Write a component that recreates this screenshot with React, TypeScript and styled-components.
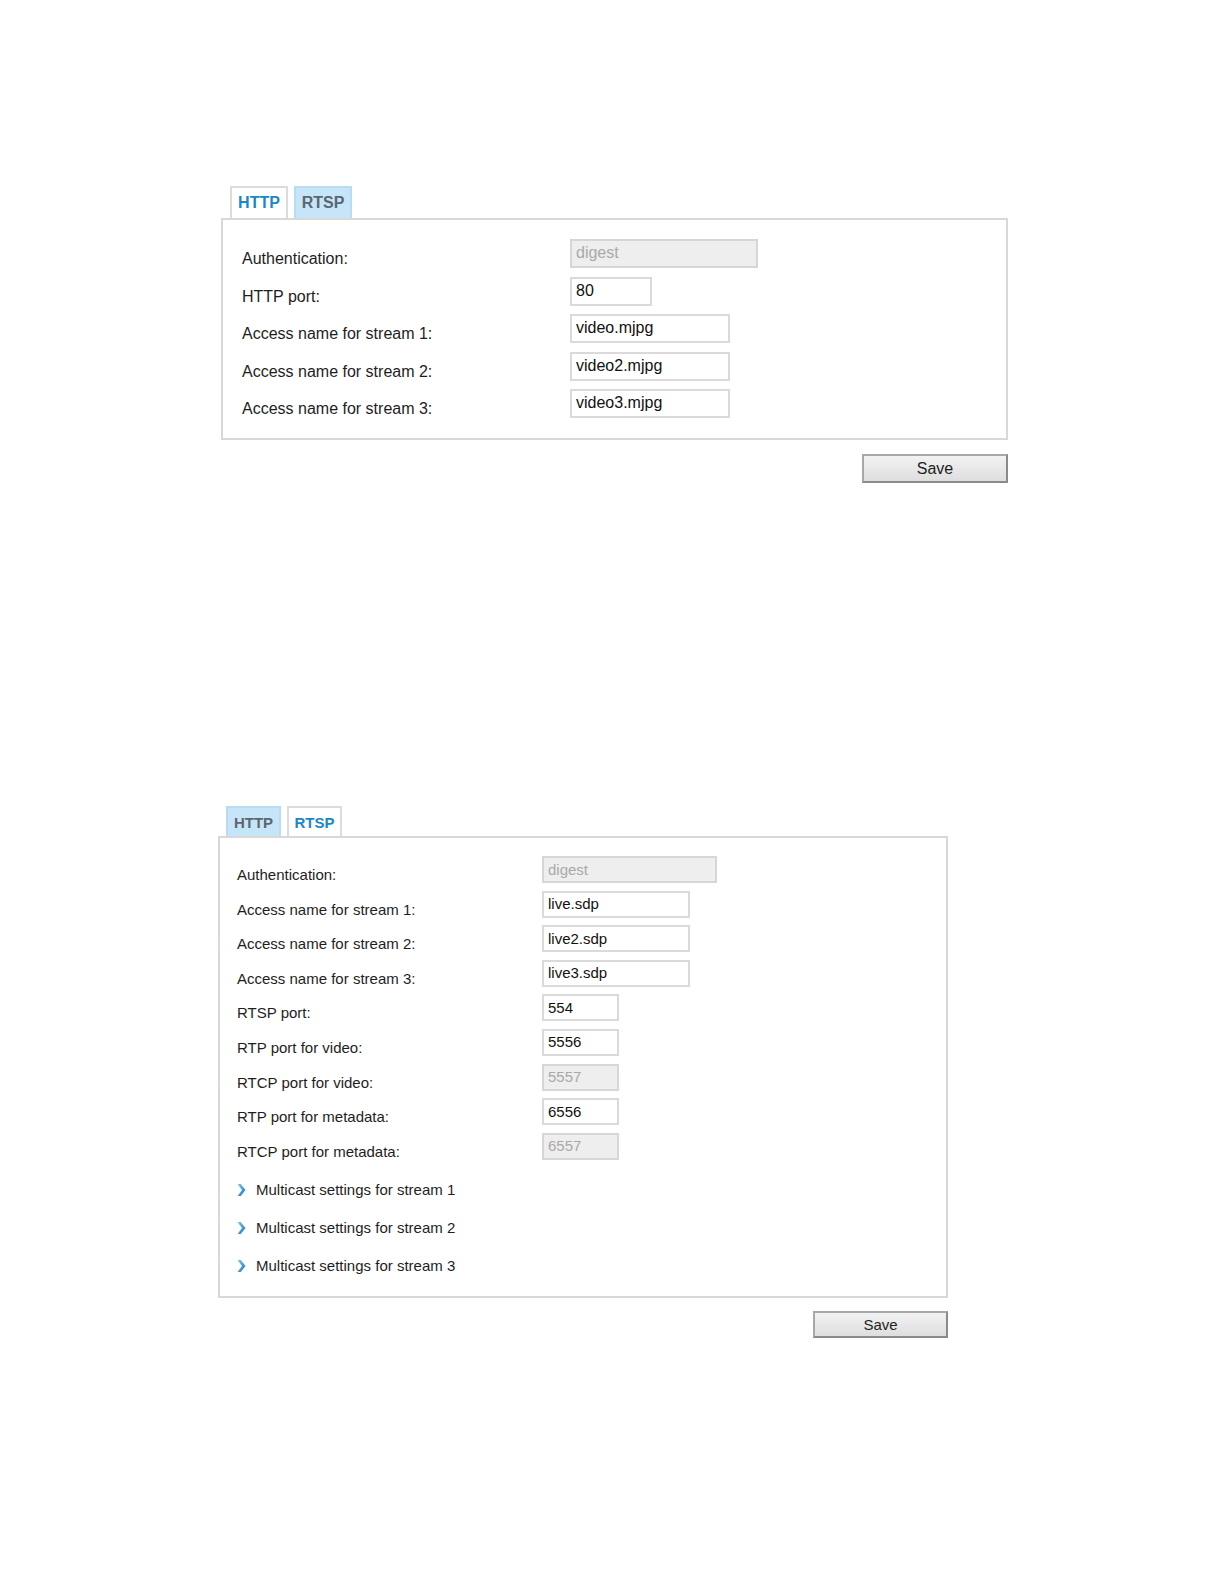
import React, { FC } from "react";
import styled, { createGlobalStyle } from "styled-components";

const GlobalStyle = createGlobalStyle`
  html, body {
    margin: 0;
    padding: 0;
    background: #ffffff;
  }
  body {
    font-family: "Liberation Sans", Arial, sans-serif;
    color: #222222;
  }
`;

type Size = {
  left: number;
  width: number;
  font: number;
  tabW: number;
  tabH: number;
  tabPad: number;
  labelCol: number;
  padLeft: number;
  padTop: number;
  padBottom: number;
  inputH: number;
  rowGap: number;
  saveW: number;
  saveH: number;
  saveGap: number;
};

const large: Size = {
  left: 221,
  width: 787,
  font: 16,
  tabW: 58,
  tabH: 32,
  tabPad: 9,
  labelCol: 328,
  padLeft: 19,
  padTop: 19,
  padBottom: 20,
  inputH: 29,
  rowGap: 8.5,
  saveW: 146,
  saveH: 29,
  saveGap: 14,
};

const small: Size = {
  left: 218,
  width: 730,
  font: 15,
  tabW: 55,
  tabH: 30,
  tabPad: 8,
  labelCol: 305,
  padLeft: 17,
  padTop: 18,
  padBottom: 18,
  inputH: 27,
  rowGap: 7.6,
  saveW: 135,
  saveH: 27,
  saveGap: 13,
};

type Field = {
  label: string;
  value: string;
  width: number;
  disabled?: boolean;
};

const httpFields: Field[] = [
  { label: "Authentication:", value: "digest", width: 188, disabled: true },
  { label: "HTTP port:", value: "80", width: 82 },
  { label: "Access name for stream 1:", value: "video.mjpg", width: 160 },
  { label: "Access name for stream 2:", value: "video2.mjpg", width: 160 },
  { label: "Access name for stream 3:", value: "video3.mjpg", width: 160 },
];

const rtspFields: Field[] = [
  { label: "Authentication:", value: "digest", width: 175, disabled: true },
  { label: "Access name for stream 1:", value: "live.sdp", width: 148 },
  { label: "Access name for stream 2:", value: "live2.sdp", width: 148 },
  { label: "Access name for stream 3:", value: "live3.sdp", width: 148 },
  { label: "RTSP port:", value: "554", width: 77 },
  { label: "RTP port for video:", value: "5556", width: 77 },
  { label: "RTCP port for video:", value: "5557", width: 77, disabled: true },
  { label: "RTP port for metadata:", value: "6556", width: 77 },
  { label: "RTCP port for metadata:", value: "6557", width: 77, disabled: true },
];

const multicast = [
  "Multicast settings for stream 1",
  "Multicast settings for stream 2",
  "Multicast settings for stream 3",
];

const Chevron: FC = () => (
  <ChevronSvg width="9" height="14" viewBox="0 0 9 14">
    <defs>
      <linearGradient id="chev" x1="0" y1="0" x2="1" y2="1">
        <stop offset="0" stopColor="#86c8f0" />
        <stop offset="1" stopColor="#1474bb" />
      </linearGradient>
    </defs>
    <path d="M0.5 1 L3.8 1 L8.5 7 L3.8 13 L0.5 13 L5 7 Z" fill="url(#chev)" />
  </ChevronSvg>
);

const SettingsBlock: FC<{
  size: Size;
  active: "HTTP" | "RTSP";
  fields: Field[];
  links?: string[];
}> = ({ size, active, fields, links }) => (
  <Section $s={size}>
    <TabBar $s={size}>
      {["HTTP", "RTSP"].map((t) => (
        <Tab key={t} $s={size} $active={t === active}>
          {t}
        </Tab>
      ))}
    </TabBar>
    <Box $s={size}>
      <FieldGrid $s={size}>
        {fields.map((f) => (
          <React.Fragment key={f.label}>
            <Label $s={size}>{f.label}</Label>
            <Input
              $s={size}
              $w={f.width}
              disabled={f.disabled}
              defaultValue={f.value}
              readOnly
            />
          </React.Fragment>
        ))}
      </FieldGrid>
      {links && (
        <LinkList>
          {links.map((l) => (
            <LinkRow key={l} $s={size}>
              <Chevron />
              {l}
            </LinkRow>
          ))}
        </LinkList>
      )}
    </Box>
    <SaveRow $s={size}>
      <SaveButton $s={size}>Save</SaveButton>
    </SaveRow>
  </Section>
);

export default function App() {
  return (
    <>
      <GlobalStyle />
      <Page>
        <SettingsBlock size={large} active="HTTP" fields={httpFields} />
        <Spacer />
        <SettingsBlock
          size={small}
          active="RTSP"
          fields={rtspFields}
          links={multicast}
        />
      </Page>
    </>
  );
}

const Page = styled.div`
  padding-top: 186px;
  height: 1584px;
  box-sizing: border-box;
`;

const Spacer = styled.div`
  height: 323px;
`;

const Section = styled.section<{ $s: Size }>`
  margin-left: ${(p) => p.$s.left}px;
  width: ${(p) => p.$s.width}px;
  font-size: ${(p) => p.$s.font}px;
`;

const TabBar = styled.div<{ $s: Size }>`
  display: flex;
  gap: 6px;
  padding-left: ${(p) => p.$s.tabPad}px;
`;

const Tab = styled.div<{ $s: Size; $active: boolean }>`
  box-sizing: border-box;
  width: ${(p) => p.$s.tabW}px;
  height: ${(p) => p.$s.tabH}px;
  display: flex;
  align-items: center;
  justify-content: center;
  font-weight: bold;
  font-size: ${(p) => p.$s.font}px;
  border: 2px solid ${(p) => (p.$active ? "#dcdcdc" : "#b9dcf3")};
  border-bottom: none;
  background: ${(p) => (p.$active ? "#ffffff" : "#c7e5f9")};
  color: ${(p) => (p.$active ? "#1b87c9" : "#5b6770")};
`;

const Box = styled.div<{ $s: Size }>`
  box-sizing: border-box;
  border: 2px solid #d8d8d8;
  padding: ${(p) => `${p.$s.padTop}px ${p.$s.padLeft}px ${p.$s.padBottom}px`};
`;

const FieldGrid = styled.div<{ $s: Size }>`
  display: grid;
  grid-template-columns: ${(p) => p.$s.labelCol}px 1fr;
  row-gap: ${(p) => p.$s.rowGap}px;
  align-items: center;
`;

const Label = styled.div<{ $s: Size }>`
  padding-top: 5px;
  line-height: ${(p) => p.$s.inputH}px;
  height: ${(p) => p.$s.inputH}px;
  box-sizing: border-box;
  color: #1e1e1e;
  white-space: nowrap;
`;

const Input = styled.input<{ $s: Size; $w: number }>`
  box-sizing: border-box;
  width: ${(p) => p.$w}px;
  height: ${(p) => p.$s.inputH}px;
  margin: 0;
  padding: 0 0 1px 4px;
  font-family: "Liberation Sans", Arial, sans-serif;
  font-size: ${(p) => p.$s.font}px;
  color: #111111;
  background: #ffffff;
  border: 2px solid #dadada;
  border-radius: 0;
  outline: none;

  &:disabled {
    color: #a9a9a9;
    background: #eeeeee;
    border-color: #d6d6d6;
  }
`;

const LinkList = styled.div`
  display: flex;
  flex-direction: column;
  gap: 14px;
  margin-top: 18px;
`;

const LinkRow = styled.div<{ $s: Size }>`
  display: flex;
  align-items: center;
  gap: 10px;
  height: 24px;
  color: #1e1e1e;
`;

const ChevronSvg = styled.svg`
  display: block;
  flex: none;
`;

const SaveRow = styled.div<{ $s: Size }>`
  display: flex;
  justify-content: flex-end;
  margin-top: ${(p) => p.$s.saveGap}px;
`;

const SaveButton = styled.button<{ $s: Size }>`
  box-sizing: border-box;
  width: ${(p) => p.$s.saveW}px;
  height: ${(p) => p.$s.saveH}px;
  margin: 0;
  padding: 0;
  font-family: "Liberation Sans", Arial, sans-serif;
  font-size: ${(p) => p.$s.font}px;
  color: #1e1e1e;
  background: linear-gradient(#f2f2f2, #dedede);
  border: 2px solid #8a8a8a;
  border-top-color: #a8a8a8;
  border-left-color: #a8a8a8;
  border-radius: 0;
`;
